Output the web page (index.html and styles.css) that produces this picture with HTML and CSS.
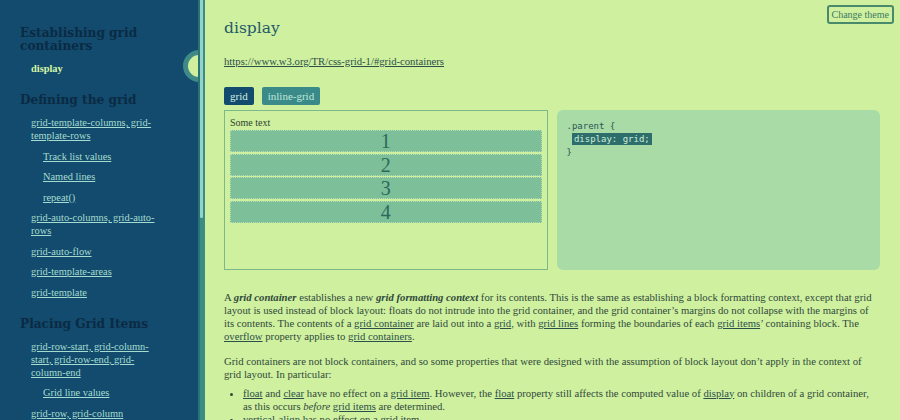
FILE: index.html
```html
<!DOCTYPE html>
<html lang="en">
<head>
<meta charset="utf-8">
<title>display</title>
<link rel="stylesheet" href="styles.css">
</head>
<body>
<div class="page">
  <nav class="sidebar">
    <section class="nav-section">
      <h2>Establishing grid containers</h2>
      <ul>
        <li class="active">display</li>
      </ul>
    </section>
    <section class="nav-section">
      <h2>Defining the grid</h2>
      <ul>
        <li><a href="#">grid-template-columns, grid-template-rows</a></li>
        <li class="sub"><a href="#">Track list values</a></li>
        <li class="sub"><a href="#">Named lines</a></li>
        <li class="sub"><a href="#">repeat()</a></li>
        <li><a href="#">grid-auto-columns, grid-auto-rows</a></li>
        <li><a href="#">grid-auto-flow</a></li>
        <li><a href="#">grid-template-areas</a></li>
        <li><a href="#">grid-template</a></li>
      </ul>
    </section>
    <section class="nav-section">
      <h2>Placing Grid Items</h2>
      <ul>
        <li><a href="#">grid-row-start, grid-column-start, grid-row-end, grid-column-end</a></li>
        <li class="sub"><a href="#">Grid line values</a></li>
        <li><a href="#">grid-row, grid-column</a></li>
        <li><a href="#">grid-area</a></li>
      </ul>
    </section>
  </nav>
  <div class="scrollbar"><div class="thumb"></div></div>
  <button class="toggle" aria-label="Toggle sidebar"></button>
  <main class="main">
    <button class="theme-btn">Change theme</button>
    <h1 class="title">display</h1>
    <p class="spec"><a href="#">https://www.w3.org/TR/css-grid-1/#grid-containers</a></p>
    <div class="tabs">
      <button class="tab tab-active">grid</button>
      <button class="tab">inline-grid</button>
    </div>
    <div class="demo">
      <div class="preview">
        <div class="preview-text">Some text</div>
        <div class="grid-demo">
          <div class="item">1</div>
          <div class="item">2</div>
          <div class="item">3</div>
          <div class="item">4</div>
        </div>
      </div>
      <pre class="code">.parent {
 <span class="hl">display: grid;</span>
}</pre>
    </div>
    <p class="para">A <b><i>grid container</i></b> establishes a new <b><i>grid formatting context</i></b> for its contents. This is the same as establishing a block formatting context, except that grid layout is used instead of block layout: floats do not intrude into the grid container, and the grid container’s margins do not collapse with the margins of its contents. The contents of a <a href="#">grid container</a> are laid out into a <a href="#">grid</a>, with <a href="#">grid lines</a> forming the boundaries of each <a href="#">grid items</a>’ containing block. The <a href="#">overflow</a> property applies to <a href="#">grid containers</a>.</p>
    <p class="para">Grid containers are not block containers, and so some properties that were designed with the assumption of block layout don’t apply in the context of grid layout. In particular:</p>
    <ul class="notes">
      <li><a href="#">float</a> and <a href="#">clear</a> have no effect on a <a href="#">grid item</a>. However, the <a href="#">float</a> property still affects the computed value of <a href="#">display</a> on children of a grid container, as this occurs <i>before</i> <a href="#">grid items</a> are determined.</li>
      <li><a href="#">vertical-align</a> has no effect on a grid item.</li>
    </ul>
  </main>
</div>
</body>
</html>
```
FILE: styles.css
```css
* { box-sizing: border-box; }
html, body { margin: 0; padding: 0; height: 100%; overflow: hidden; }
body {
  font-family: "Liberation Serif", "Times New Roman", serif;
  font-size: 10.7px;
  background: #cff09f;
  color: #2f4a3c;
}
.page {
  position: relative;
  display: flex;
  height: 420px;
  overflow: hidden;
}
.sidebar {
  flex: 0 0 198px;
  background: #124b6d;
  padding: 26px 30px 0 20px;
  overflow: hidden;
}
.nav-section + .nav-section { margin-top: 18px; }
.nav-section h2 {
  margin: 0 0 10px;
  font-family: "DejaVu Serif", serif;
  font-stretch: condensed;
  font-size: 13.5px;
  line-height: 13px;
  font-weight: bold;
  color: #0b2a44;
}
.nav-section ul {
  list-style: none;
  margin: 0;
  padding: 0 0 0 11px;
  display: flex;
  flex-direction: column;
  gap: 7.5px;
}
.nav-section li {
  line-height: 13px;
  font-size: 10.4px;
}
.nav-section li.sub { padding-left: 12px; }
.nav-section li a { color: #a6dccf; }
.nav-section li.active { color: #d6f6a6; font-weight: bold; }
.scrollbar {
  flex: 0 0 7px;
  background: #3a8c84;
  border-left: 2px solid #2b7275;
  position: relative;
  z-index: 3;
}
.thumb {
  width: 3px;
  height: 218px;
  background: #93d3c9;
  border-radius: 0 0 2px 2px;
}
.toggle {
  position: absolute;
  left: 183px;
  top: 50px;
  width: 32px;
  height: 32px;
  border-radius: 50%;
  border: 5px solid #3f8a86;
  background: #cfef9e;
  padding: 0;
  z-index: 1;
}
.main {
  flex: 1;
  position: relative;
  z-index: 2;
  background: #cff09f;
  padding: 18px 20px 0 19px;
  min-width: 0;
}
.theme-btn {
  position: absolute;
  top: 5px;
  right: 6px;
  height: 19px;
  padding: 0 3px;
  font-family: "Liberation Serif", serif;
  font-size: 10px;
  color: #3d7a66;
  background: transparent;
  border: 2px solid #4a8a6c;
  border-radius: 3px;
}
.title {
  margin: 0;
  font-family: "DejaVu Serif", serif;
  font-weight: normal;
  font-size: 15.5px;
  line-height: 20px;
  color: #1f5a6a;
}
.spec {
  margin: 16.5px 0 0;
  line-height: 13px;
}
.spec a { color: #2c4f4a; }
.tabs {
  margin-top: 19.5px;
  display: flex;
  gap: 8px;
}
.tab {
  height: 18px;
  padding: 0 6px;
  border: none;
  border-radius: 2px;
  font-family: "Liberation Serif", serif;
  font-size: 11px;
  background: #3a8a8a;
  color: #bfe8d6;
}
.tab-active {
  background: #124b6d;
  color: #cfeee0;
}
.demo {
  margin-top: 5px;
  height: 160px;
  display: grid;
  grid-template-columns: 1fr 1fr;
  gap: 9px;
}
.preview {
  border: 1px solid #7db88b;
  padding: 5px;
}
.preview-text {
  font-size: 10px;
  line-height: 13px;
  color: #2c3f30;
  margin-bottom: 1px;
}
.grid-demo {
  display: grid;
  gap: 1.5px;
}
.item {
  height: 22px;
  background: #7cbf99;
  border: 1px dotted #b4dcb4;
  text-align: center;
  font-size: 20px;
  line-height: 21px;
  color: #2c6a5c;
}
.code {
  margin: 0;
  background: #a8dba6;
  border-radius: 6px;
  padding: 9.5px 10px;
  font-family: "DejaVu Sans Mono", monospace;
  font-size: 9px;
  line-height: 13px;
  color: #2c5654;
}
.hl {
  background: #2d6e6c;
  color: #cdeed6;
  padding: 1px 2px;
}
.para {
  margin: 0;
  line-height: 13px;
}
.demo + .para { margin-top: 20.5px; }
.para + .para { margin-top: 12px; }
.para a, .notes a { color: #2c4f4a; }
.notes {
  margin: 6px 0 0;
  padding-left: 19px;
  line-height: 13px;
}
```
